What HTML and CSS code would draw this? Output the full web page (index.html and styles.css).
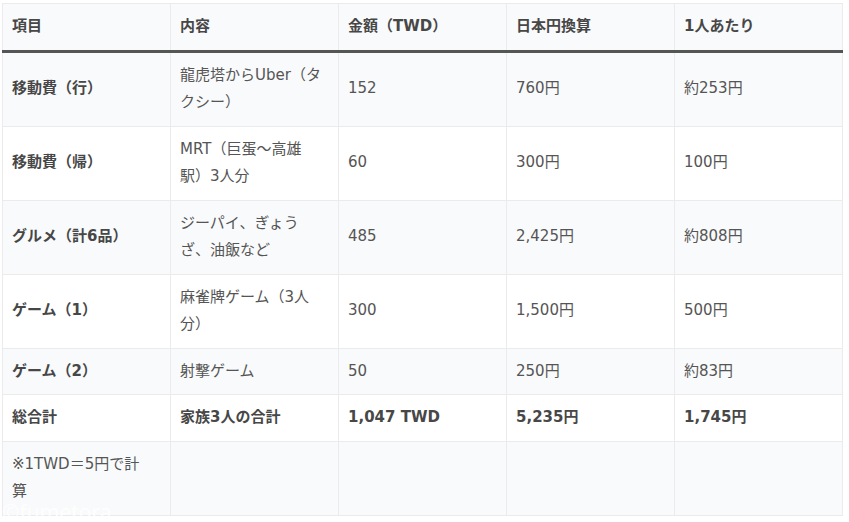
FILE: index.html
```html
<!DOCTYPE html>
<html lang="ja">
<head>
<meta charset="utf-8">
<title>費用まとめ</title>
<link rel="stylesheet" href="styles.css">
</head>
<body>
<div class="wrap">
  <table class="cost">
    <thead>
      <tr>
        <th>項目</th>
        <th>内容</th>
        <th>金額（TWD）</th>
        <th>日本円換算</th>
        <th>1人あたり</th>
      </tr>
    </thead>
    <tbody>
      <tr>
        <td class="label">移動費（行）</td>
        <td>龍虎塔からUber（タクシー）</td>
        <td>152</td>
        <td>760円</td>
        <td>約253円</td>
      </tr>
      <tr>
        <td class="label">移動費（帰）</td>
        <td>MRT（巨蛋～高雄駅）3人分</td>
        <td>60</td>
        <td>300円</td>
        <td>100円</td>
      </tr>
      <tr>
        <td class="label">グルメ（計6品）</td>
        <td>ジーパイ、ぎょうざ、油飯など</td>
        <td>485</td>
        <td>2,425円</td>
        <td>約808円</td>
      </tr>
      <tr>
        <td class="label">ゲーム（1）</td>
        <td>麻雀牌ゲーム（3人分）</td>
        <td>300</td>
        <td>1,500円</td>
        <td>500円</td>
      </tr>
      <tr>
        <td class="label">ゲーム（2）</td>
        <td>射撃ゲーム</td>
        <td>50</td>
        <td>250円</td>
        <td>約83円</td>
      </tr>
      <tr class="total">
        <td>総合計</td>
        <td>家族3人の合計</td>
        <td>1,047 TWD</td>
        <td>5,235円</td>
        <td>1,745円</td>
      </tr>
      <tr>
        <td class="note">※1TWD＝5円で計算</td>
        <td></td>
        <td></td>
        <td></td>
        <td></td>
      </tr>
    </tbody>
  </table>
  <div class="watermark">©fumetora</div>
</div>
</body>
</html>
```

FILE: styles.css
```css
html, body {
  margin: 0;
  padding: 0;
  background: #ffffff;
}

body {
  font-family: "DejaVu Sans", "Noto Sans CJK JP", sans-serif;
  font-size: 15px;
  color: #555555;
}

.wrap {
  position: relative;
  padding: 3px 0 0 2px;
  height: 519px;
  overflow: hidden;
}

.cost {
  border-collapse: collapse;
  table-layout: fixed;
  width: 841px;
}

.cost th,
.cost td {
  border: 1px solid #ebebeb;
  padding: 9px 15px 9px 9px;
  line-height: 27.5px;
  text-align: left;
  vertical-align: middle;
}

.cost th {
  font-weight: 700;
  color: #474747;
  background: #f9fafb;
  border-bottom: 3px solid #555555;
}

.cost tbody tr:nth-child(odd) td {
  background: #f9fafb;
}

.cost tbody tr:nth-child(even) td {
  background: #ffffff;
}

.cost td.label,
.cost tr.total td {
  font-weight: 700;
  color: #474747;
}

.cost td.note {
  padding-right: 22px;
}

.watermark {
  position: absolute;
  left: 2px;
  top: 500px;
  font-family: "Noto Sans", sans-serif;
  font-size: 21px;
  line-height: 24px;
  color: rgba(255, 255, 255, 0.85);
}
```
